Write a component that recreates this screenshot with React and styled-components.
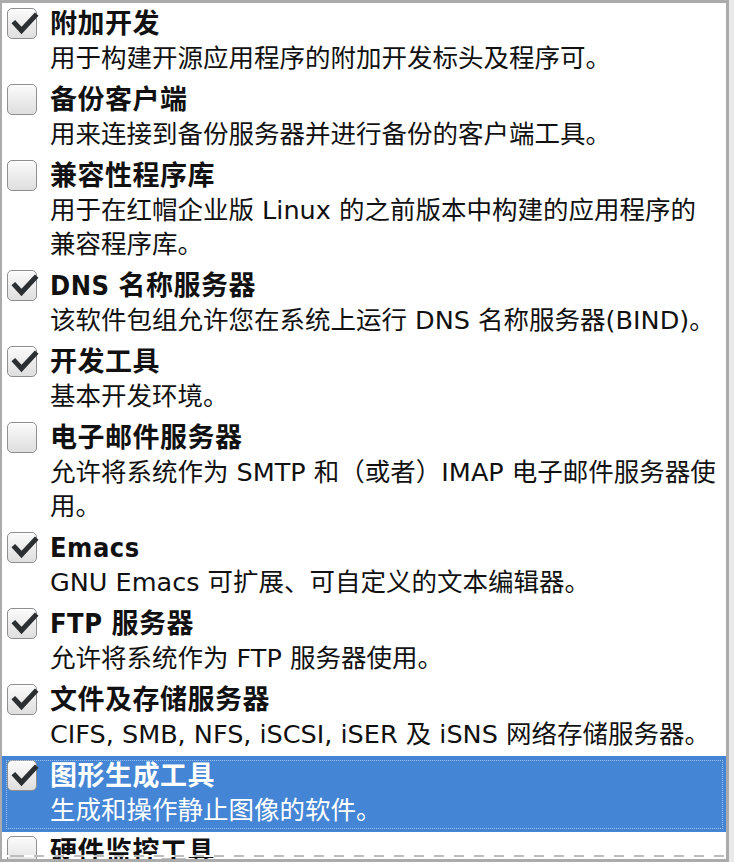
import React from 'react';
import styled, { createGlobalStyle } from 'styled-components';

const groups = [
   { id: 1, on: true, name: '附加开发', desc: ['用于构建开源应用程序的附加开发标头及程序可。'] },
   { id: 2, on: false, name: '备份客户端', desc: ['用来连接到备份服务器并进行备份的客户端工具。'] },
   { id: 3, on: false, name: '兼容性程序库', desc: ['用于在红帽企业版 Linux 的之前版本中构建的应用程序的', '兼容程序库。'] },
   { id: 4, on: true, name: 'DNS 名称服务器', desc: ['该软件包组允许您在系统上运行 DNS 名称服务器(BIND)。'] },
   { id: 5, on: true, name: '开发工具', desc: ['基本开发环境。'] },
   { id: 6, on: false, name: '电子邮件服务器', desc: ['允许将系统作为 SMTP 和（或者）IMAP 电子邮件服务器使', '用。'] },
   { id: 7, on: true, name: 'Emacs', desc: ['GNU Emacs 可扩展、可自定义的文本编辑器。'] },
   { id: 8, on: true, name: 'FTP 服务器', desc: ['允许将系统作为 FTP 服务器使用。'] },
   { id: 9, on: true, name: '文件及存储服务器', desc: ['CIFS, SMB, NFS, iSCSI, iSER 及 iSNS 网络存储服务器。'] },
   { id: 10, on: true, selected: true, name: '图形生成工具', desc: ['生成和操作静止图像的软件。'] },
   { id: 11, on: false, name: '硬件监控工具', desc: ['一组用于监控服务器硬件的工具。'] },
];

const Check = ({ on }) => (
   <Box>
      {on && (
         <svg width="30" height="30" viewBox="0 0 30 30">
            <path d="M6 14.5 L12.5 21.5 L26 7" fill="none" stroke="#2b2f31" strokeWidth="5" strokeLinecap="square" strokeLinejoin="miter" />
         </svg>
      )}
   </Box>
);

const App = () => {
   return (
      <>
         <GlobalStyle />
         <Frame>
            <List>
               {groups.map(group => (
                  <Row key={group.id} $selected={group.selected}>
                     <Check on={group.on} />
                     <Text>
                        <Title>{group.name}</Title>
                        {group.desc.map(line => (
                           <Desc key={line}>{line}</Desc>
                        ))}
                     </Text>
                  </Row>
               ))}
            </List>
            <Dashes />
         </Frame>
      </>
   );
};

const GlobalStyle = createGlobalStyle`
  html, body {
    margin: 0;
    padding: 0;
    background: #e9e9e9;
  }

  body {
    font-family: "DejaVu Sans", "Noto Sans CJK SC", sans-serif;
    color: #111;
  }
`;

const Frame = styled.div`
  position: relative;
  width: 729px;
  height: 862px;
  box-sizing: border-box;
  border: 3px solid #ababab;
  border-left-width: 2px;
  background: #fff;
  overflow: hidden;
`;

const List = styled.div`
  display: flex;
  flex-direction: column;
  padding-top: 1px;
`;

const Row = styled.div`
  position: relative;
  display: flex;
  align-items: flex-start;
  gap: 13px;
  padding: 3px 0 5px 5px;
  background: ${p => (p.$selected ? '#4485d5' : 'transparent')};
  color: ${p => (p.$selected ? '#fff' : '#111')};

  &::after {
    content: '';
    display: ${p => (p.$selected ? 'block' : 'none')};
    position: absolute;
    top: 4px;
    left: 4px;
    right: 3px;
    bottom: 3px;
    border: 1px dotted rgba(200, 222, 248, 0.7);
  }
`;

const Box = styled.div`
  flex: none;
  width: 30px;
  height: 31px;
  margin-top: 1px;
  box-sizing: border-box;
  border: 1px solid #8e8e8e;
  border-radius: 5px;
  background: linear-gradient(#fbfbfb, #dedede);
  box-shadow: inset 0 1px 0 #fff;

  svg {
    display: block;
    margin: 0 0 0 1px;
  }
`;

const Text = styled.div`
  display: flex;
  flex-direction: column;
  white-space: nowrap;
`;

const Title = styled.div`
  font-family: "DejaVu Sans Condensed", "DejaVu Sans", "Noto Sans CJK SC", sans-serif;
  font-stretch: condensed;
  font-size: 27px;
  font-weight: bold;
  letter-spacing: 0.5px;
  line-height: 34px;
`;

const Desc = styled.div`
  font-size: 25.5px;
  line-height: 34px;
`;

const Dashes = styled.div`
  position: absolute;
  left: 0;
  right: 0;
  bottom: 2px;
  height: 2px;
  background: #fff repeating-linear-gradient(to right, #bdbdbd 0 10px, transparent 10px 20px);
  background-position: 12px 0;
`;

export default App;
